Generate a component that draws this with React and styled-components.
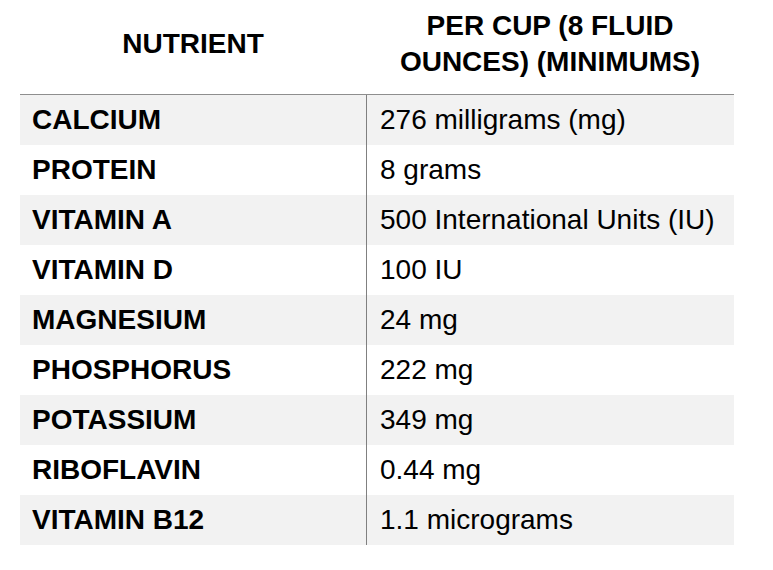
import React from "react";
import styled, { createGlobalStyle } from "styled-components";

const nutrients = [
  ["CALCIUM", "276 milligrams (mg)"],
  ["PROTEIN", "8 grams"],
  ["VITAMIN A", "500 International Units (IU)"],
  ["VITAMIN D", "100 IU"],
  ["MAGNESIUM", "24 mg"],
  ["PHOSPHORUS", "222 mg"],
  ["POTASSIUM", "349 mg"],
  ["RIBOFLAVIN", "0.44 mg"],
  ["VITAMIN B12", "1.1 micrograms"],
];

const App = () => {
  return (
    <>
      <GlobalStyle />
      <Page>
        <Table>
          <Head>
            <HeadCell>NUTRIENT</HeadCell>
            <HeadCell>
              PER CUP (8 FLUID
              <br />
              OUNCES) (MINIMUMS)
            </HeadCell>
          </Head>
          {nutrients.map(([name, amount], i) => (
            <Row key={name} $shaded={i % 2 === 0}>
              <Cell $bold>{name}</Cell>
              <Cell $divider>{amount}</Cell>
            </Row>
          ))}
        </Table>
      </Page>
    </>
  );
};

const GlobalStyle = createGlobalStyle`
  body {
    margin: 0;
    background: #fff;
    font-family: "Liberation Sans", Arial, sans-serif;
    color: #000;
  }
`;

const Page = styled.div`
  padding-left: 20px;
`;

const Table = styled.div`
  width: 714px;
`;

const Head = styled.div`
  display: grid;
  grid-template-columns: 346px 368px;
  height: 94px;
  border-bottom: 1px solid #8e8e8e;
`;

const HeadCell = styled.div`
  display: flex;
  align-items: center;
  justify-content: center;
  text-align: center;
  padding-bottom: 6px;
  font-size: 28px;
  font-weight: 700;
  line-height: 36px;
`;

const Row = styled.div`
  display: grid;
  grid-template-columns: 346px 368px;
  height: 50px;
  background-color: ${(p) => (p.$shaded ? "#f2f2f2" : "#fff")};
`;

const Cell = styled.div`
  display: flex;
  align-items: center;
  padding-bottom: 1px;
  font-size: 28px;
  font-weight: ${(p) => (p.$bold ? 700 : 400)};
  border-left: ${(p) => (p.$divider ? "1px solid #808080" : "none")};
  padding-left: ${(p) => (p.$divider ? "13px" : "12px")};
`;

export default App;
